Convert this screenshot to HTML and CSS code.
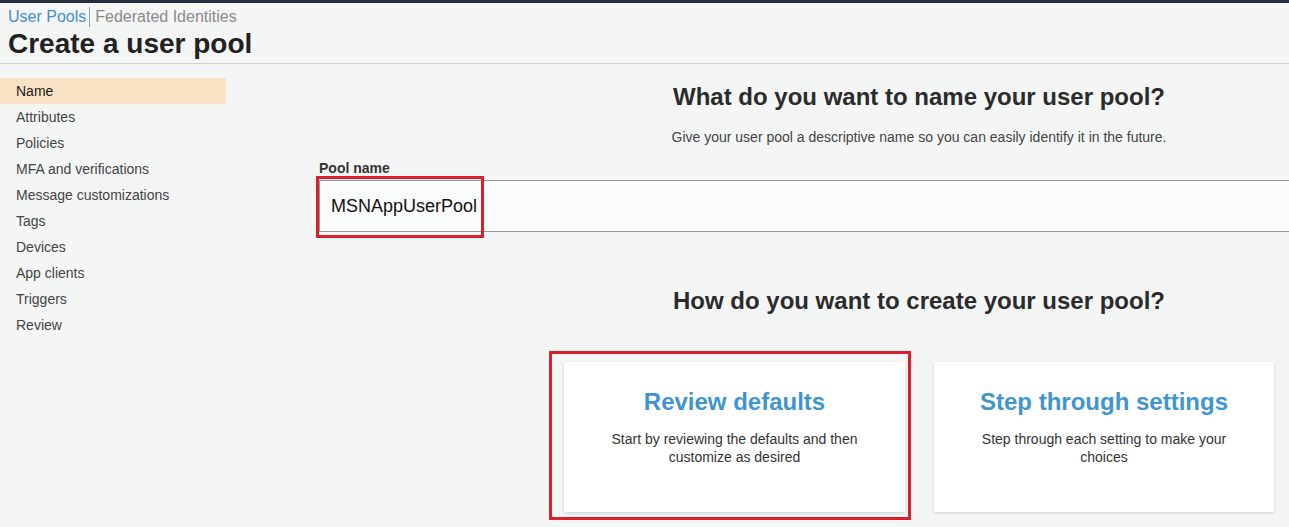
FILE: index.html
```html
<!DOCTYPE html>
<html lang="en">
<head>
<meta charset="utf-8">
<title>Create a user pool</title>
<link rel="stylesheet" href="styles.css">
</head>
<body>
<div class="topbar"></div>
<header class="header">
  <nav class="crumbs"><a class="crumb active" href="#">User Pools</a><span class="crumb sep">Federated Identities</span></nav>
  <h1 class="title">Create a user pool</h1>
</header>
<div class="layout">
  <aside class="sidebar">
    <div class="nav-item selected">Name</div>
    <div class="nav-item">Attributes</div>
    <div class="nav-item">Policies</div>
    <div class="nav-item">MFA and verifications</div>
    <div class="nav-item">Message customizations</div>
    <div class="nav-item">Tags</div>
    <div class="nav-item">Devices</div>
    <div class="nav-item">App clients</div>
    <div class="nav-item">Triggers</div>
    <div class="nav-item">Review</div>
  </aside>
  <main class="main">
    <div class="centered">
      <h2 class="q first">What do you want to name your user pool?</h2>
      <p class="hint">Give your user pool a descriptive name so you can easily identify it in the future.</p>
    </div>
    <label class="label">Pool name</label>
    <div class="field">
      <div class="input">MSNAppUserPool</div>
      <div class="mark mark-input"></div>
    </div>
    <div class="centered">
      <h2 class="q second">How do you want to create your user pool?</h2>
      <div class="cards">
        <div class="card-wrap">
          <div class="card">
            <div class="card-title">Review defaults</div>
            <div class="card-text">Start by reviewing the defaults and then customize as desired</div>
          </div>
          <div class="mark mark-card"></div>
        </div>
        <div class="card-wrap">
          <div class="card">
            <div class="card-title">Step through settings</div>
            <div class="card-text">Step through each setting to make your choices</div>
          </div>
        </div>
      </div>
    </div>
  </main>
</div>
</body>
</html>
```

FILE: styles.css
```css
html, body {
  margin: 0;
  padding: 0;
  overflow: hidden;
}
body {
  background: #f4f6f6;
  font-family: "Liberation Sans", Arial, sans-serif;
  color: #333;
  height: 527px;
}
.topbar {
  height: 3px;
  background: #232f3e;
}
.header {
  padding: 4px 0 0 8px;
  border-bottom: 1px solid #cfd2d2;
}
.crumbs {
  font-size: 16px;
  line-height: 20px;
  display: flex;
}
.crumb {
  text-decoration: none;
}
.crumb.active {
  color: #3f8fcc;
}
.crumb.sep {
  color: #8a8a8a;
  border-left: 1px solid #9a9a9a;
  margin-left: 3px;
  padding-left: 5px;
}
.title {
  margin: 1px 0 3px;
  font-size: 28px;
  line-height: 32px;
  font-weight: bold;
  color: #222;
}
.layout {
  display: flex;
}
.sidebar {
  width: 226px;
  flex-shrink: 0;
  padding-top: 14px;
}
.nav-item {
  height: 26px;
  line-height: 26px;
  padding-left: 16px;
  font-size: 14px;
  color: #444;
}
.nav-item.selected {
  background: #f7e3c4;
  color: #1a1a1a;
}
.main {
  margin-left: 93px;
  flex: 1;
  min-width: 0;
}
.centered {
  padding-left: 230px;
  text-align: center;
}
.q {
  margin: 0;
  font-size: 24px;
  line-height: 28px;
  font-weight: bold;
  color: #2b2b2b;
}
.q.first {
  margin-top: 19px;
}
.q.second {
  margin-top: 55px;
}
.hint {
  margin: 18px 0 0;
  font-size: 14px;
  line-height: 16px;
  color: #444;
}
.label {
  display: block;
  margin-top: 15px;
  font-size: 14px;
  line-height: 16px;
  font-weight: bold;
  color: #333;
}
.field {
  position: relative;
  margin-top: 4px;
}
.input {
  height: 50px;
  border-top: 1px solid #999;
  border-bottom: 1px solid #999;
  border-left: 1px solid #999;
  background: #fbfcfc;
  padding-left: 11px;
  font-size: 18px;
  line-height: 50px;
  color: #111;
}
.mark {
  position: absolute;
  border: 3px solid #dc1f2b;
  box-sizing: border-box;
  pointer-events: none;
}
.mark-input {
  left: -3px;
  top: -4px;
  width: 168px;
  height: 62px;
}
.cards {
  width: 710px;
  margin: 47px auto 0;
  display: grid;
  grid-template-columns: 341px 340px;
  column-gap: 29px;
  text-align: center;
}
.card-wrap {
  position: relative;
}
.card {
  height: 150px;
  box-sizing: border-box;
  background: #fff;
  box-shadow: 0 1px 3px rgba(0, 0, 0, 0.16);
  padding: 26px 30px 0;
}
.card-title {
  font-size: 24px;
  line-height: 28px;
  font-weight: bold;
  color: #3f95cf;
}
.card-text {
  margin-top: 14px;
  font-size: 14px;
  line-height: 18px;
  color: #333;
}
.mark-card {
  left: -15px;
  top: -11px;
  right: -6px;
  bottom: -8px;
}
```
